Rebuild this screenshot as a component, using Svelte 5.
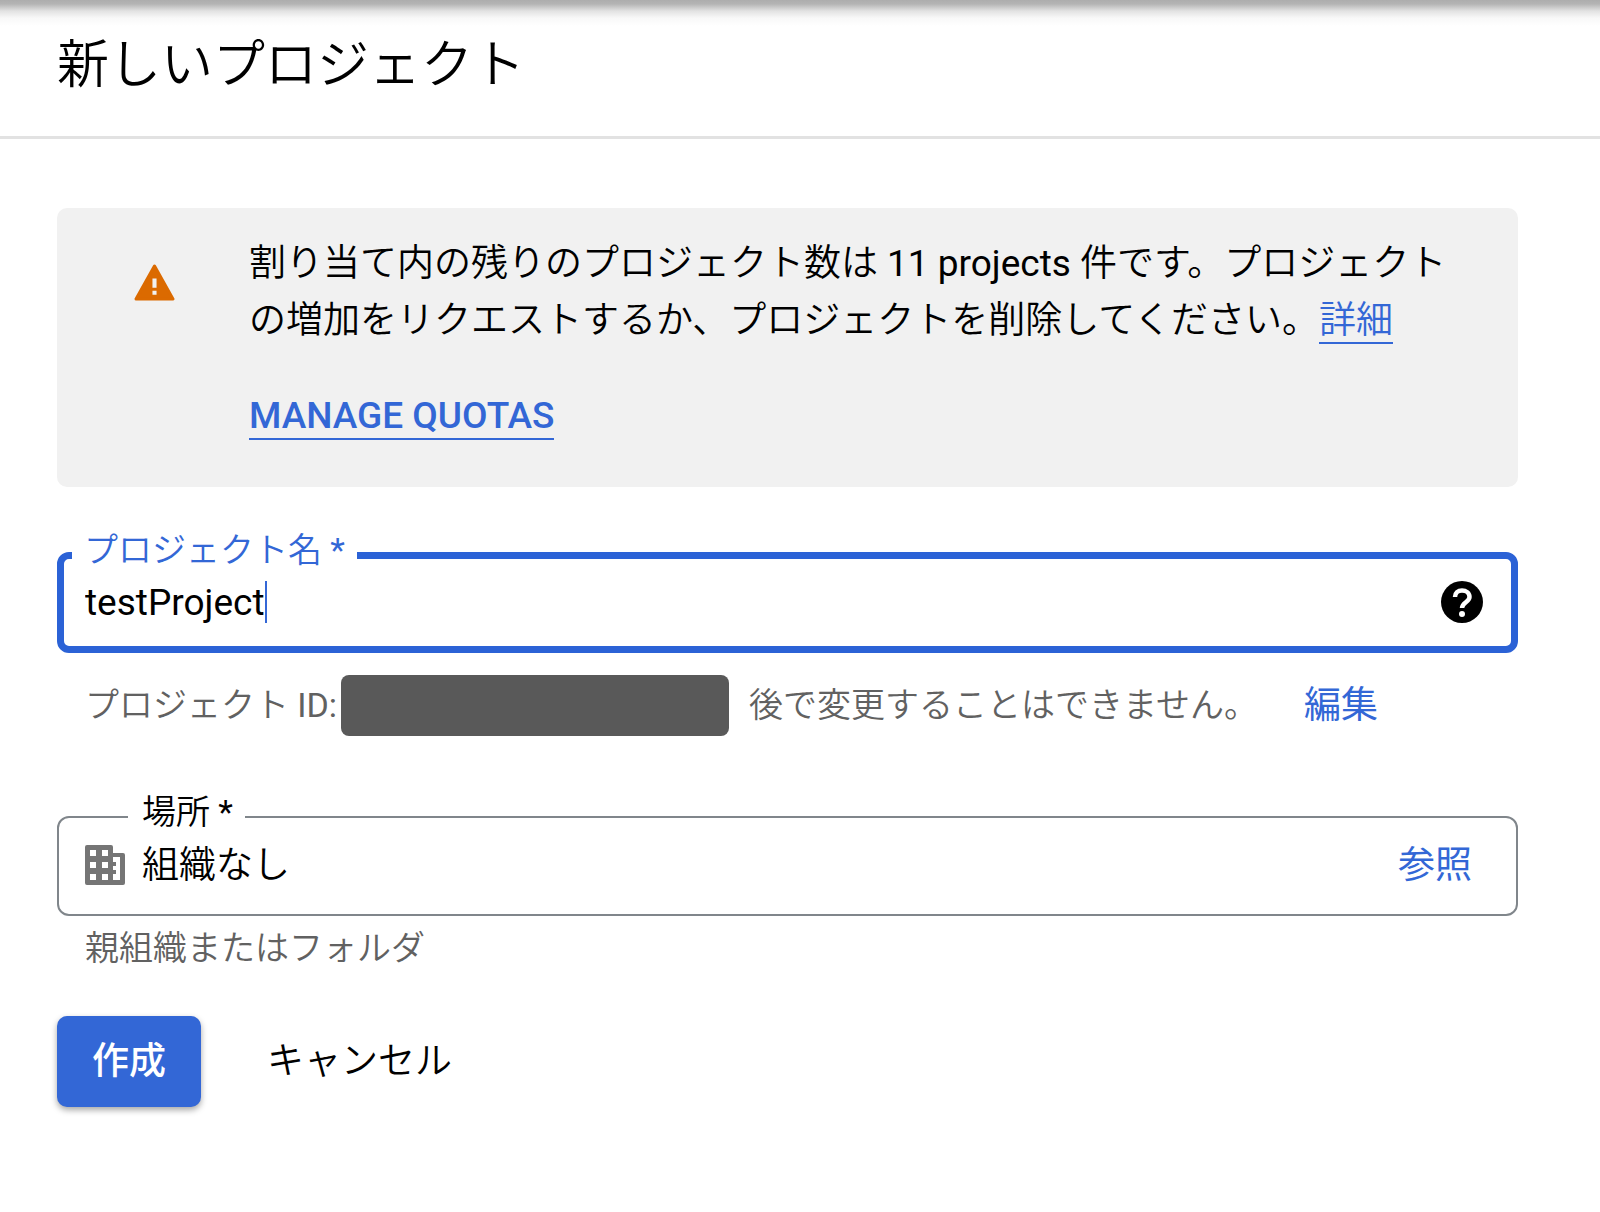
<script>
  let projectName = $state('testProject');
  let location = $state('組織なし');
</script>

<div class="page">
  <header class="header">
    <h1>新しいプロジェクト</h1>
  </header>

  <main class="content">
    <section class="notice">
      <svg class="warning" viewBox="0 0 40 36" aria-hidden="true">
        <path d="M20 2 38 34H2Z" fill="#db6a00" stroke="#db6a00" stroke-width="3" stroke-linejoin="round" />
        <path d="M18 14h4v9h-4zM18 26h4v4h-4z" fill="#f1f1f1" />
      </svg>
      <div>
        <p>
          割り当て内の残りのプロジェクト数は <span class="latin">11 projects</span> 件です。プロジェクトの増加をリクエストするか、プロジェクトを削除してください。<a href="#details">詳細</a>
        </p>
        <a class="quotas" href="#quotas">MANAGE QUOTAS</a>
      </div>
    </section>

    <form onsubmit={(event) => event.preventDefault()}>
      <fieldset class="field active">
        <legend><label for="project-name">プロジェクト名 <span class="latin">*</span></label></legend>
        <div class="row">
          <div class="entry">
            <input id="project-name" type="text" autocomplete="off" bind:value={projectName} />
            <span class="caret"></span>
          </div>
          <button class="help" type="button" aria-label="ヘルプ">
            <svg viewBox="0 0 42 42" aria-hidden="true">
              <circle cx="21" cy="21" r="21" />
              <path d="M14 16C14 12 17 9.500 21 9.500s7.500 2.500 7.500 6.500c0 5-7.500 5.500-7.500 11" fill="none" stroke="#fff" stroke-width="4.500" />
              <circle cx="21" cy="33" r="3" fill="#fff" />
            </svg>
          </button>
        </div>
      </fieldset>
      <div class="hint project-id">
        <span>プロジェクト <span class="latin">ID:</span></span>
        <span class="masked"></span>
        <span class="note">後で変更することはできません。</span>
        <button class="action" type="button">編集</button>
      </div>

      <fieldset class="field place">
        <legend><label for="location">場所 <span class="latin">*</span></label></legend>
        <div class="row">
          <svg class="building" viewBox="0 0 40 40" aria-hidden="true">
            <path fill-rule="evenodd" d="M2 0h24q2 0 2 2v6h10q2 0 2 2v28q0 2-2 2H2q-2 0-2-2V2q0-2 2-2zM5 5v6h6V5zM17 5v6h6V5zM5 17v6h6v-6zM17 17v6h6v-6zM5 29v6h6v-6zM17 29v6h6v-6zM28 12v5h3v4h-3v4h3v4h-3v6h7V12z" />
          </svg>
          <input id="location" type="text" readonly bind:value={location} />
          <button class="action" type="button">参照</button>
        </div>
      </fieldset>
      <p class="hint parent">親組織またはフォルダ</p>

      <div class="buttons">
        <button class="create" type="submit">作成</button>
        <button class="cancel" type="button">キャンセル</button>
      </div>
    </form>
  </main>
</div>

<style>
  :global(body) {
    margin: 0;
    background: #fff;
  }

  .page {
    min-height: 100vh;
    box-sizing: border-box;
    overflow: hidden;
    color: #000;
    font-family: Roboto, 'Noto Sans CJK JP', sans-serif;
    font-size: 37px;
    line-height: 57px;
    font-weight: 350;
  }

  .latin {
    font-weight: 400;
  }

  .header {
    padding: 36px 57px 40px;
    border-bottom: 3px solid #e2e2e2;
    background: linear-gradient(#adadad, #b4b4b4 4px, #e2e2e2 11px, #f8f8f8 18px, #fff 26px);
  }

  h1 {
    margin: 0;
    font-size: 52px;
    line-height: 60px;
    font-weight: 350;
  }

  .content {
    padding: 69px 82px 90px 57px;
  }

  .notice {
    display: flex;
    align-items: flex-start;
    gap: 74px;
    padding: 27px 60px 43px 77px;
    border-radius: 10px;
    background: #f1f1f1;
  }

  .warning {
    flex: none;
    width: 41px;
    height: 37px;
    margin-top: 29px;
  }

  .notice p {
    margin: 0 0 38px;
  }

  a {
    color: #3367d6;
    text-decoration: none;
    border-bottom: 2px solid #3367d6;
  }

  .quotas {
    display: inline-block;
    margin-bottom: 3px;
    font-weight: 500;
    line-height: 45px;
  }

  .field {
    min-width: 0;
    margin: 0;
    border: 2px solid #80868b;
    border-radius: 12px;
    padding: 0 44px 19px 26px;
  }

  .active {
    margin-top: 51px;
    border: 7px solid #2b62d6;
    padding: 0 28px 14px 8px;
  }

  legend {
    padding: 0 12px 10px;
    font-size: 34px;
    line-height: 24px;
  }

  .active legend {
    color: #3367d6;
  }

  .place legend {
    margin-left: 43px;
    padding-left: 14px;
  }

  .row {
    display: flex;
    align-items: center;
    height: 60px;
  }

  .active .row {
    padding-left: 13px;
  }

  .place .row {
    padding-top: 1px;
  }

  .entry {
    display: flex;
    flex: 1;
    align-items: center;
    min-width: 0;
  }

  input {
    min-width: 0;
    padding: 0;
    border: 0;
    outline: 0;
    background: transparent;
    color: inherit;
    font: inherit;
  }

  #project-name {
    field-sizing: content;
    caret-color: transparent;
    font-weight: 400;
  }

  #location {
    flex: 1;
  }

  .caret {
    width: 2px;
    height: 42px;
    background: #3367d6;
  }

  button {
    padding: 0;
    border: 0;
    background: none;
    color: inherit;
    font: inherit;
    cursor: pointer;
  }

  .help {
    display: flex;
  }

  .help svg {
    width: 42px;
    height: 42px;
  }

  .building {
    width: 40px;
    height: 40px;
    margin-right: 17px;
    fill: #757575;
  }

  .action {
    color: #3367d6;
    font-weight: 400;
  }

  .hint {
    padding-left: 28px;
    color: #616161;
    font-size: 34px;
  }

  .project-id {
    display: flex;
    align-items: center;
    margin: 22px 0 64px;
  }

  .masked {
    width: 388px;
    height: 61px;
    margin: 0 20px 0 4px;
    border-radius: 8px;
    background: #595959;
  }

  .project-id .action {
    margin-left: 46px;
    font-size: 37px;
  }

  .parent {
    margin: 4px 0 39px;
  }

  .buttons {
    display: flex;
    gap: 66px;
  }

  .create {
    padding: 17px 35px;
    border-radius: 10px;
    background: #3367d6;
    box-shadow: 0 3px 6px rgb(0 0 0 / 35%);
    color: #fff;
    font-weight: 500;
  }
</style>
